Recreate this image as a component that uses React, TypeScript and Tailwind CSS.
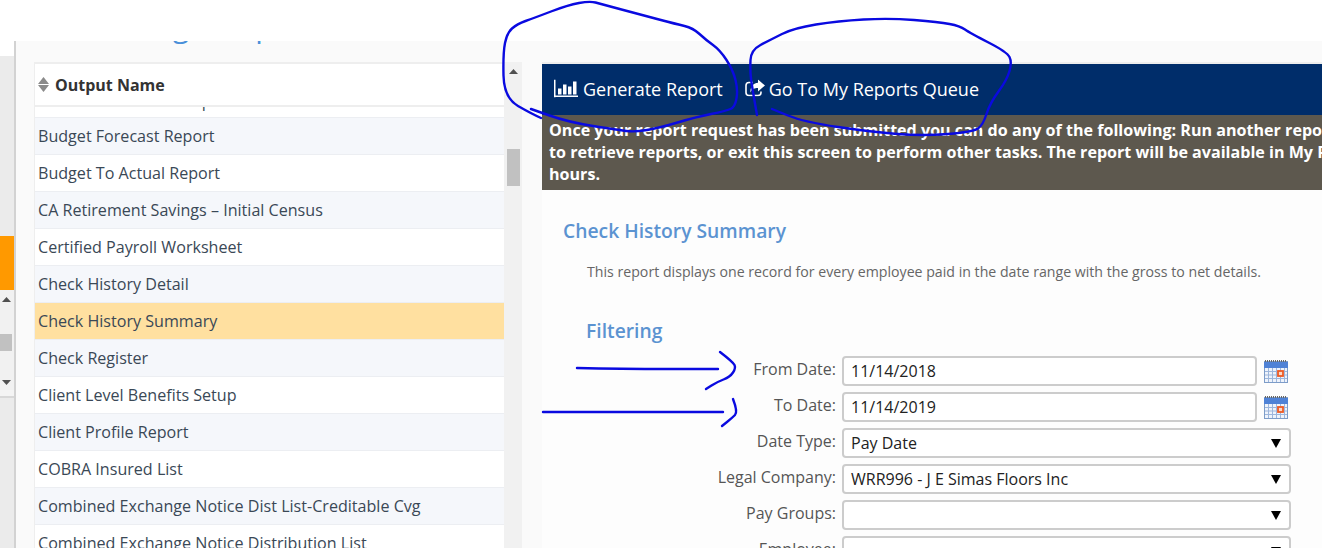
const ROWS = [
  { name: "Budget Forecast Report" },
  { name: "Budget To Actual Report" },
  { name: "CA Retirement Savings – Initial Census" },
  { name: "Certified Payroll Worksheet" },
  { name: "Check History Detail" },
  { name: "Check History Summary", selected: true },
  { name: "Check Register" },
  { name: "Client Level Benefits Setup" },
  { name: "Client Profile Report" },
  { name: "COBRA Insured List" },
  { name: "Combined Exchange Notice Dist List-Creditable Cvg" },
  { name: "Combined Exchange Notice Distribution List" },
];

const FIELDS = [
  { label: "From Date:", value: "11/14/2018", kind: "date" },
  { label: "To Date:", value: "11/14/2019", kind: "date" },
  { label: "Date Type:", value: "Pay Date", kind: "select" },
  { label: "Legal Company:", value: "WRR996 - J E Simas Floors Inc", kind: "select" },
  { label: "Pay Groups:", value: "", kind: "select" },
  { label: "Employee:", value: "", kind: "select" },
];

// pen marks drawn on top of the screenshot
const SCRIBBLES: number[][][] = [
  [[541, 118], [532, 114], [504, 98], [503, 53], [507, 33], [517, 24], [534, 18], [568, 5], [590, 1], [601, 4], [642, 15], [676, 24], [693, 28], [706, 40], [720, 50], [733, 70], [738, 90], [735, 107], [726, 111], [696, 117], [659, 128], [635, 132], [618, 130], [568, 122], [531, 109]],
  [[757, 115], [752, 87], [750, 70], [751, 50], [770, 40], [794, 28], [838, 21], [889, 18], [939, 22], [960, 26], [970, 33], [1007, 52], [1012, 62], [1007, 80], [990, 103], [983, 125], [973, 132], [923, 136], [872, 132], [804, 122], [772, 109]],
  [[577, 368], [620, 369], [718, 369]],
  [[720, 352], [733, 362], [736, 368], [730, 377], [717, 382], [706, 389]],
  [[543, 412], [723, 412]],
  [[733, 399], [738, 412], [732, 418], [722, 426]],
];

function smooth(pts: number[][]) {
  let d = `M${pts[0][0]} ${pts[0][1]}`;
  for (let i = 1; i < pts.length - 1; i++) {
    const mx = (pts[i][0] + pts[i + 1][0]) / 2;
    const my = (pts[i][1] + pts[i + 1][1]) / 2;
    d += ` Q${pts[i][0]} ${pts[i][1]} ${mx} ${my}`;
  }
  const last = pts[pts.length - 1];
  return d + ` L${last[0]} ${last[1]}`;
}

function BarIcon() {
  return (
    <svg width="24" height="18" viewBox="0 0 24 18" fill="#fff" className="shrink-0 -translate-y-[1.5px]">
      <rect x="0" y="0" width="1.5" height="18" />
      <rect x="0" y="16" width="24" height="1.5" />
      <rect x="4" y="9" width="3.5" height="6" />
      <rect x="9" y="5" width="3.5" height="10" />
      <rect x="14" y="7" width="3.5" height="8" />
      <rect x="19" y="2" width="3.5" height="13" />
    </svg>
  );
}

function ShareIcon() {
  return (
    <svg width="20" height="17" viewBox="0 0 20 17" className="shrink-0 -translate-y-[1.5px]">
      <path d="M8 3H4a3 3 0 0 0-3 3v7a3 3 0 0 0 3 3h9a3 3 0 0 0 3-3v-1" fill="none" stroke="#fff" strokeWidth="1.6" />
      <path d="M13 0 20 6 13 12V8.500C9.500 8.500 7 9.500 5.500 13 5 7.500 8.500 3.500 13 3.300Z" fill="#fff" />
    </svg>
  );
}

function CalendarIcon() {
  const xs = [4, 8, 12, 16, 20];
  const ys = [11, 14.5, 18];
  return (
    <svg width="24" height="23" viewBox="0 0 24 23" className="shrink-0 ml-[7px] mt-1">
      <rect x="0" y="1" width="24" height="22" fill="#7d9cc8" />
      <rect x="0" y="2" width="24" height="6" fill="#4f82d6" />
      <rect x="1" y="8" width="22" height="14" fill="#eef3fb" />
      {xs.map((x) => (
        <rect key={x} x={x} y="8" width="1" height="14" fill="#9db6dc" />
      ))}
      {ys.map((y) => (
        <rect key={y} x="1" y={y} width="22" height="1" fill="#9db6dc" />
      ))}
      {[1, 3, 5, 7, 9, 11, 13, 15, 17, 19, 21].map((x) => (
        <rect key={x} x={x} y="0" width="1" height="2" fill="#666" />
      ))}
      <rect x="14" y="11" width="5" height="5" fill="#fbd9c8" stroke="#ee5a24" strokeWidth="1.800" />
    </svg>
  );
}

function Triangle({ down, color, w = 9, h = 5 }: { down?: boolean; color: string; w?: number; h?: number }) {
  return (
    <svg width={w} height={h} viewBox="0 0 10 6" preserveAspectRatio="none" fill={color} className="block">
      <path d={down ? "M0 0h10L5 6z" : "M5 0l5 6H0z"} />
    </svg>
  );
}

function Field({ label, value, kind }: { label: string; value: string; kind: string }) {
  return (
    <div className="flex items-start h-[30px]">
      <div className="w-[294px] text-right text-[16px] leading-[26px] text-[#555]">{label}</div>
      <div
        className={`ml-[6px] h-[30px] border-2 border-[#ccc] rounded-[4px] bg-white flex items-center justify-between pl-[7px] pr-[8px] text-[16px] text-[#222] ${
          kind === "date" ? "w-[415px]" : "w-[449px]"
        }`}
      >
        <span className="whitespace-nowrap">{value}</span>
        {kind === "select" && <Triangle down color="#000" w={10} h={9} />}
      </div>
      {kind === "date" && <CalendarIcon />}
    </div>
  );
}

export default function App() {
  return (
    <div className="relative w-[1322px] h-[548px] overflow-hidden bg-white font-['Open_Sans',sans-serif] flex flex-col">
      <div className="h-[41px] shrink-0 bg-white" />
      <div className="flex-1 min-h-0 flex">
        {/* left rail of the page behind */}
        <aside className="w-[16px] shrink-0 border-r-2 border-[#d2d2d2] flex flex-col">
          <div className="h-[15px] bg-white" />
          <div className="h-[180px] bg-[#ebebeb]" />
          <div className="h-[54px] bg-[#ff9900]" />
          <div className="h-[100px] bg-[#f1f1f1] flex flex-col">
            <div className="pt-[7px] pl-[2px]">
              <Triangle color="#505050" />
            </div>
            <div className="mt-[32px] h-[17px] w-[12px] bg-[#c1c1c1]" />
            <div className="mt-[29px] pl-[2px]">
              <Triangle down color="#505050" />
            </div>
          </div>
          <div className="h-[8px] bg-[#f4f4f4] border-b-2 border-[#d8d8d8]" />
          <div className="flex-1 bg-[#ebebeb]" />
        </aside>

        <main className="flex-1 min-w-0 bg-[#fafafa] flex flex-col">
          <div className="h-[21px] shrink-0 overflow-hidden">
            <div className="-mt-[35px] pl-[57px] text-[30px] leading-[40px] [word-spacing:6px] text-[#4a90d9] whitespace-nowrap">
              Running Output
            </div>
          </div>
          <div className="flex-1 min-h-0 flex">
            {/* report list */}
            <section className="w-[506px] shrink-0 pl-[18px] flex">
              <div className="w-[470px] shrink-0 border-l border-[#eee] flex flex-col">
                <div className="h-[45px] shrink-0 border-y-2 border-[#eee] bg-white flex items-center pl-[3px] gap-[6px]">
                  <span className="flex flex-col gap-[1px]">
                    <Triangle color="#8a8a8a" w={11} h={7} />
                    <Triangle down color="#8a8a8a" w={11} h={7} />
                  </span>
                  <span className="text-[16px] font-bold text-[#333]">Output Name</span>
                </div>
                <div className="h-[11px] shrink-0 overflow-hidden bg-white border-b border-[#eceef2] pl-[3px]">
                  <div className="-mt-[18px] text-[16px] leading-[24px] [word-spacing:-4px] text-[#3a4856] whitespace-nowrap">
                    Benefit Deduction Setup
                  </div>
                </div>
                {ROWS.map((row, i) => (
                  <div
                    key={row.name}
                    className={`h-[37px] shrink-0 border-b border-[#eceef2] flex items-center pl-[3px] text-[16.1px] text-[#3a4856] whitespace-nowrap ${
                      row.selected ? "bg-[#ffe0a0]" : i % 2 === 0 ? "bg-[#f5f7fb]" : "bg-white"
                    }`}
                  >
                    {row.name}
                  </div>
                ))}
              </div>
              <div className="w-[18px] shrink-0 bg-[#f1f1f1] flex flex-col items-center">
                <div className="pt-[7px]">
                  <Triangle color="#505050" />
                </div>
                <div className="mt-[75px] h-[37px] w-[13px] bg-[#c1c1c1]" />
              </div>
            </section>

            {/* report options */}
            <section className="ml-[20px] flex-1 min-w-0 overflow-hidden flex flex-col border-t-2 border-[#eee]">
              <div className="h-[51px] shrink-0 bg-[#002d6a] flex items-center text-[18px] text-white whitespace-nowrap">
                <div className="ml-[12px] flex items-center gap-[5px]">
                  <BarIcon />
                  <span>Generate Report</span>
                </div>
                <div className="ml-[22px] flex items-center gap-[4px]">
                  <ShareIcon />
                  <span>Go To My Reports Queue</span>
                </div>
              </div>
              <div className="h-[75px] shrink-0 bg-[#5d584e] pl-[7px] pt-[4px] text-[16.1px] leading-[22px] font-bold text-white whitespace-nowrap">
                Once your report request has been submitted you can do any of the following: Run another report, go to My Reports Queue
                <br />
                to retrieve reports, or exit this screen to perform other tasks. The report will be available in My Reports Queue within 24
                <br />
                hours.
              </div>
              <div className="flex-1 min-h-0 bg-[#fdfdfd] border-l border-[#eee] -ml-px">
                <h2 className="ml-[21px] mt-[27px] text-[19.3px] leading-[28px] font-semibold text-[#5b93d1]">
                  Check History Summary
                </h2>
                <p className="ml-[45px] mt-[18px] text-[14.17px] leading-[18px] text-[#666] whitespace-nowrap">
                  This report displays one record for every employee paid in the date range with the gross to net details.
                </p>
                <h3 className="ml-[44px] mt-[36px] text-[19.3px] leading-[28px] font-semibold text-[#5b93d1]">Filtering</h3>
                <div className="mt-[11px] flex flex-col gap-[6px]">
                  {FIELDS.map((f) => (
                    <Field key={f.label} {...f} />
                  ))}
                </div>
              </div>
            </section>
          </div>
        </main>
      </div>

      <svg className="absolute inset-0 pointer-events-none" width="1322" height="548" viewBox="0 0 1322 548" fill="none">
        {SCRIBBLES.map((pts, i) => (
          <path key={i} d={smooth(pts)} stroke="#0a0ae0" strokeWidth="2.4" strokeLinecap="round" strokeLinejoin="round" />
        ))}
      </svg>
    </div>
  );
}
